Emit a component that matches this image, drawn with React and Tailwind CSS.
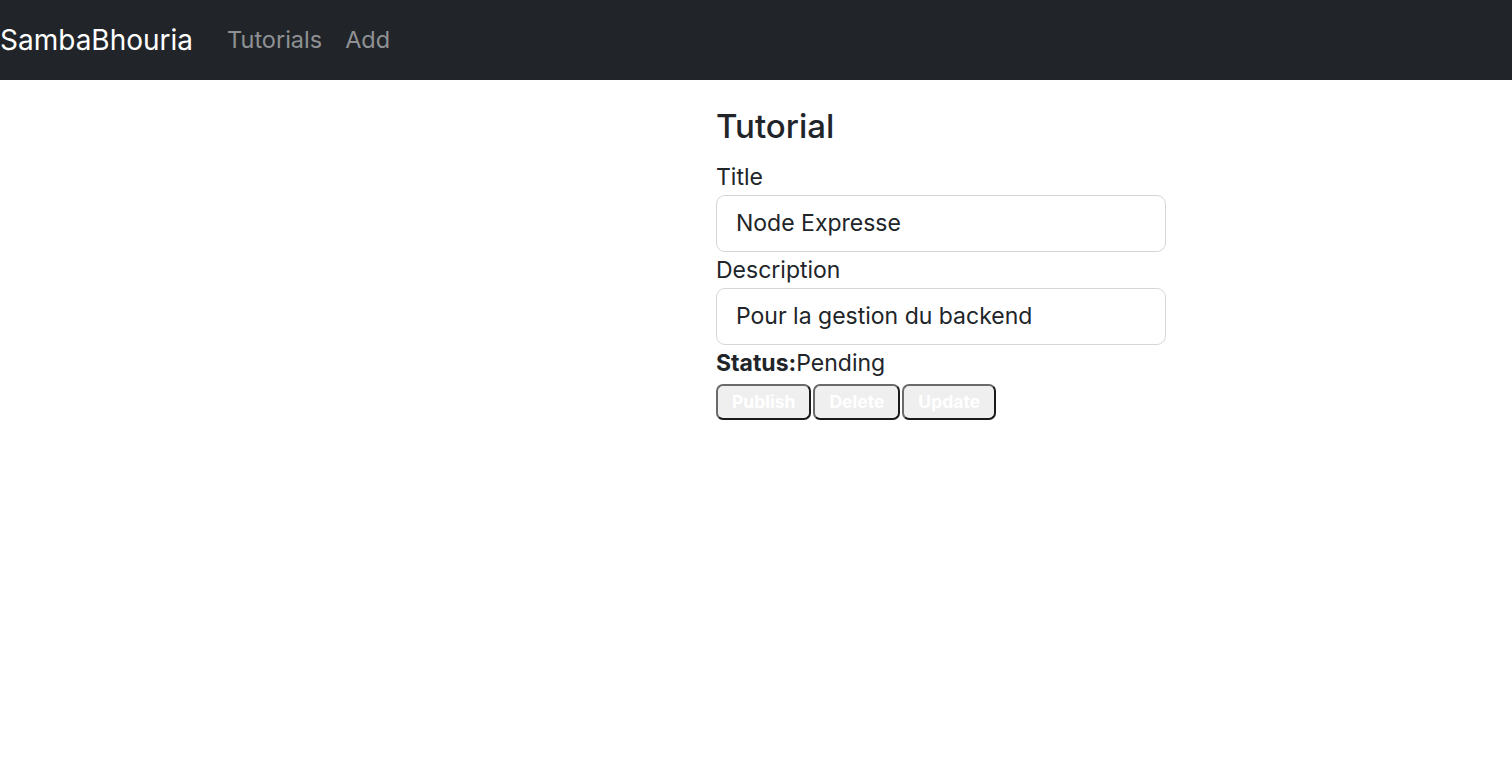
import React from "react";

// Tutorial edit page - navbar on top, form column on the right half
export default function App() {
  return (
    <div className="min-h-[766px] bg-white font-['Inter',sans-serif] text-[#212529]">
      {/* Navbar */}
      <nav className="flex h-[80px] items-center bg-[#212529]">
        <a className="text-[28px] leading-none text-white">SambaBhouria</a>
        <div className="ml-[34px] flex gap-[23px] text-[23.5px] leading-none text-[#8f9194]">
          <a>Tutorials</a>
          <a>Add</a>
        </div>
      </nav>

      {/* Edit form */}
      <main className="ml-[716px] w-[450px] pt-[27px]">
        <h4 className="text-[33px] font-medium leading-[1.2]">Tutorial</h4>
        <form className="mt-[13px]">
          <div className="mb-[1px]">
            <label className="block text-[23px] leading-[35px]">Title</label>
            <input
              className="h-[57px] w-full rounded-[9px] border border-[#d3d7db] px-[19px] text-[23px] outline-none"
              defaultValue="Node Expresse"
            />
          </div>
          <div>
            <label className="block text-[23px] leading-[35px]">Description</label>
            <input
              className="h-[57px] w-full rounded-[9px] border border-[#d3d7db] px-[19px] text-[23px] outline-none"
              defaultValue="Pour la gestion du backend"
            />
          </div>
          <div className="text-[23px] leading-[36px]">
            <strong className="font-bold">Status:</strong>Pending
          </div>
        </form>

        <div className="mt-[3px] flex gap-[2px]">
          {["Publish", "Delete", "Update"].map((label) => (
            <button
              key={label}
              className="h-[36px] rounded-[7px] border-[2.5px] border-t-[#6a6a6a] border-l-[#6a6a6a] border-b-[#1a1a1a] border-r-[#1a1a1a] bg-[#efefef] px-[14px] text-[17.5px] font-bold leading-none text-white"
            >
              {label}
            </button>
          ))}
        </div>
      </main>
    </div>
  );
}
